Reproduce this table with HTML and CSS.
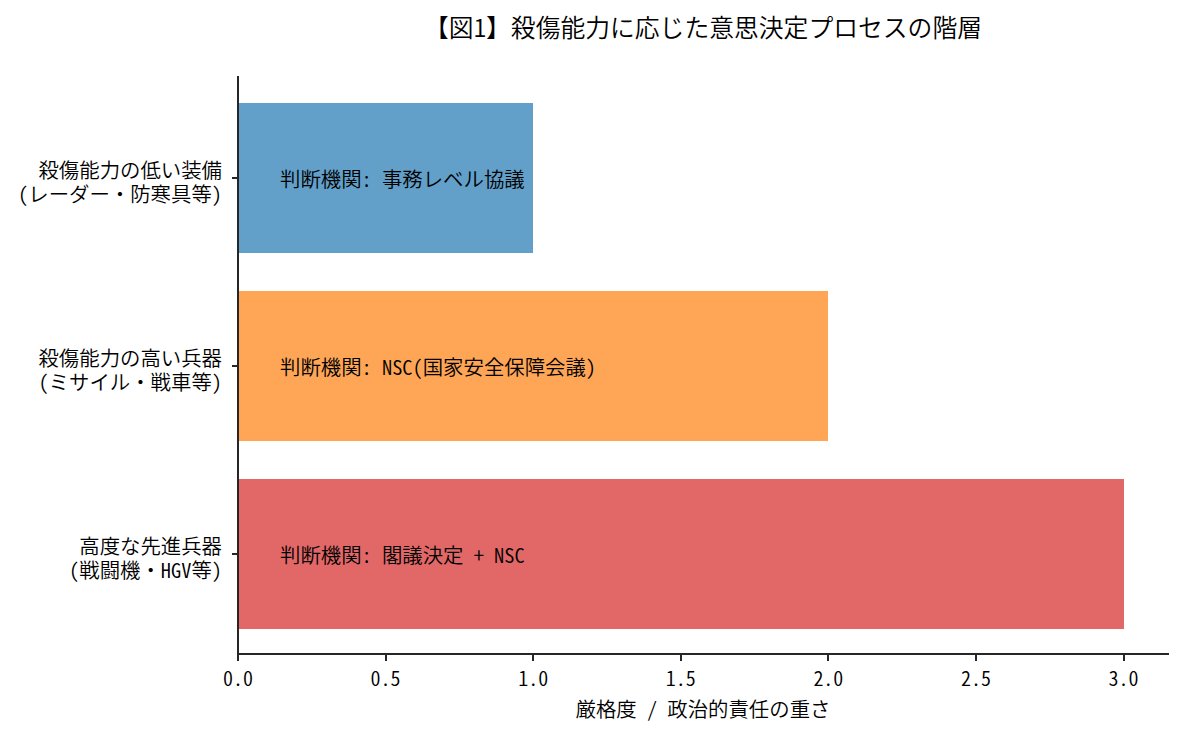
FILE: index.html
```html
<!DOCTYPE html>
<html lang="ja">
<head>
<meta charset="utf-8">
<title>殺傷能力に応じた意思決定プロセスの階層</title>
<link rel="stylesheet" href="styles.css">
</head>
<body>
<div class="figure">
  <div class="title">【図<span class="lat">1</span>】殺傷能力に応じた意思決定プロセスの階層</div>

  <div class="yaxis">
    <div class="ytick">
      <div class="ylabel">
        <div class="line">殺傷能力の低い装備</div>
        <div class="line"><span class="lat">(</span>レーダー・防寒具等<span class="lat">)</span></div>
      </div>
      <span class="ymark"></span>
    </div>
    <div class="ytick">
      <div class="ylabel">
        <div class="line">殺傷能力の高い兵器</div>
        <div class="line"><span class="lat">(</span>ミサイル・戦車等<span class="lat">)</span></div>
      </div>
      <span class="ymark"></span>
    </div>
    <div class="ytick">
      <div class="ylabel">
        <div class="line">高度な先進兵器</div>
        <div class="line"><span class="lat">(</span>戦闘機・<span class="lat">HGV</span>等<span class="lat">)</span></div>
      </div>
      <span class="ymark"></span>
    </div>
  </div>

  <div class="axes">
    <div class="bar bar-blue" style="width:294px"><span class="barlabel">判断機関<span class="lat">: </span>事務レベル協議</span></div>
    <div class="bar bar-orange" style="width:589px"><span class="barlabel">判断機関<span class="lat">: NSC(</span>国家安全保障会議<span class="lat">)</span></span></div>
    <div class="bar bar-red" style="width:885px"><span class="barlabel">判断機関<span class="lat">: </span>閣議決定<span class="lat"> + NSC</span></span></div>
  </div>

  <div class="xaxis">
    <div class="xticks">
      <div class="xtick"><span class="xmark"></span><span class="xticklabel lat">0.0</span></div>
      <div class="xtick"><span class="xmark"></span><span class="xticklabel lat">0.5</span></div>
      <div class="xtick"><span class="xmark"></span><span class="xticklabel lat">1.0</span></div>
      <div class="xtick"><span class="xmark"></span><span class="xticklabel lat">1.5</span></div>
      <div class="xtick"><span class="xmark"></span><span class="xticklabel lat">2.0</span></div>
      <div class="xtick"><span class="xmark"></span><span class="xticklabel lat">2.5</span></div>
      <div class="xtick"><span class="xmark"></span><span class="xticklabel lat">3.0</span></div>
    </div>
    <div class="xlabel">厳格度<span class="lat"> / </span>政治的責任の重さ</div>
  </div>
</div>
</body>
</html>
```

FILE: styles.css
```css
* {
  box-sizing: border-box;
}

html, body {
  margin: 0;
  padding: 0;
  background: #ffffff;
}

body {
  font-family: "Noto Sans CJK JP", "Noto Sans CJK SC", sans-serif;
  font-weight: 350;
  color: #000000;
  width: 1183px;
  height: 733px;
  overflow: hidden;
}

.lat {
  font-feature-settings: "hwid" 1;
}

.figure {
  display: grid;
  grid-template-columns: 237px 932px;
  grid-template-rows: 76px 579px auto;
}

.title {
  grid-column: 2;
  grid-row: 1;
  align-self: start;
  margin-top: 13px;
  text-align: center;
  font-size: 24.8px;
  line-height: 27px;
  white-space: nowrap;
}

.yaxis {
  grid-column: 1;
  grid-row: 2;
  display: flex;
  flex-direction: column;
  padding-top: 27px;
  gap: 38px;
}

.ytick {
  height: 150px;
  display: flex;
  align-items: center;
  justify-content: flex-end;
}

.ylabel {
  text-align: right;
  font-size: 20.4px;
  margin-right: 10px;
  margin-top: 6px;
  white-space: nowrap;
}

.ylabel .line {
  line-height: 24px;
}

.ymark {
  width: 5px;
  height: 2px;
  background: #262626;
}

.axes {
  grid-column: 2;
  grid-row: 2;
  border-left: 2px solid #262626;
  border-bottom: 2px solid #262626;
  display: flex;
  flex-direction: column;
  padding-top: 27px;
  gap: 38px;
}

.bar {
  height: 150px;
  display: flex;
  align-items: center;
  padding-left: 41px;
}

.bar-blue {
  background: #62a0ca;
}

.bar-orange {
  background: #ffa556;
}

.bar-red {
  background: #e26868;
}

.barlabel {
  font-size: 20.4px;
  line-height: 24px;
  white-space: nowrap;
}

.xaxis {
  grid-column: 2;
  grid-row: 3;
}

.xticks {
  display: flex;
  margin-left: -72.8px;
}

.xtick {
  flex: none;
  width: 147.6px;
  display: flex;
  flex-direction: column;
  align-items: center;
}

.xmark {
  width: 2px;
  height: 6px;
  background: #262626;
}

.xticklabel {
  margin-top: 7px;
  font-size: 20px;
  line-height: 20px;
}

.xlabel {
  margin-top: 10px;
  text-align: center;
  font-size: 20.4px;
  line-height: 20px;
  white-space: nowrap;
}
```
